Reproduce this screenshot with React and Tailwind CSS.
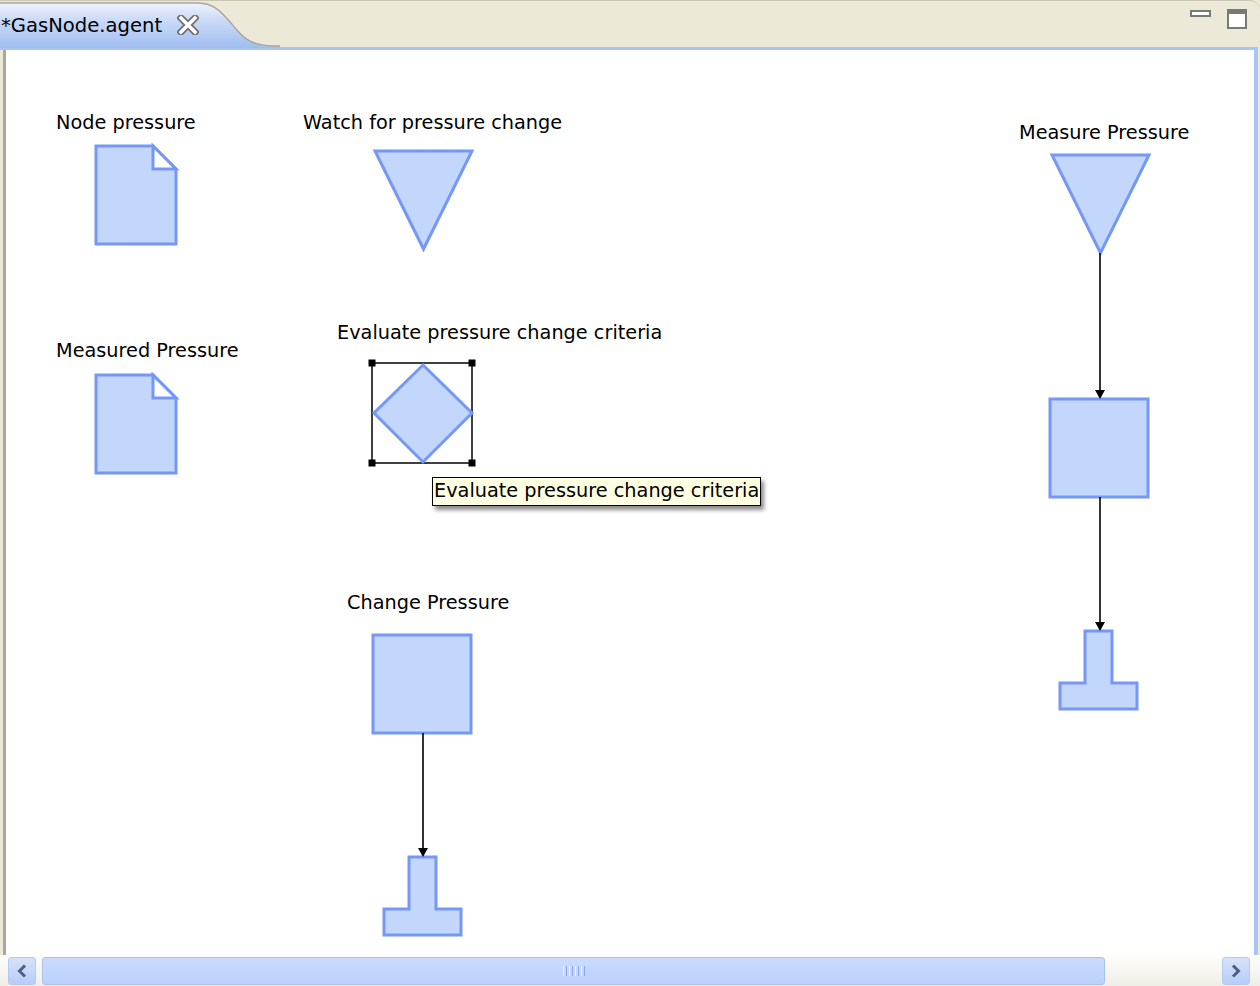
import React from 'react';

const FILL = '#c3d6fc';
const STROKE = '#7598f8';
const FONT = { fontFamily: '"DejaVu Sans", Verdana, sans-serif', fontSize: 19.3 };

const labels = [
  { text: 'Node pressure', x: 56, y: 129 },
  { text: 'Watch for pressure change', x: 303, y: 129 },
  { text: 'Measure Pressure', x: 1019, y: 139 },
  { text: 'Measured Pressure', x: 56, y: 357 },
  { text: 'Evaluate pressure change criteria', x: 337, y: 339 },
  { text: 'Change Pressure', x: 347, y: 609 },
];

const Doc = ({ x, y }) => (
  <g>
    <path
      d={`M${x} ${y} L${x + 57} ${y} L${x + 80} ${y + 23} L${x + 80} ${y + 98} L${x} ${y + 98} Z`}
      fill={FILL}
      stroke={STROKE}
      strokeWidth="3"
    />
    <path
      d={`M${x + 57} ${y} L${x + 57} ${y + 23} L${x + 80} ${y + 23} Z`}
      fill="#ffffff"
      stroke={STROKE}
      strokeWidth="3"
    />
  </g>
);

const Tri = ({ x, y }) => (
  <path
    d={`M${x} ${y} L${x + 97} ${y} L${x + 48.5} ${y + 98} Z`}
    fill={FILL}
    stroke={STROKE}
    strokeWidth="3"
  />
);

const Box = ({ x, y }) => (
  <rect x={x} y={y} width="98" height="98" fill={FILL} stroke={STROKE} strokeWidth="3" />
);

const Tee = ({ x, y }) => (
  <path
    d={`M${x + 25} ${y} L${x + 52} ${y} L${x + 52} ${y + 52} L${x + 77} ${y + 52} L${x + 77} ${y + 78} L${x} ${y + 78} L${x} ${y + 52} L${x + 25} ${y + 52} Z`}
    fill={FILL}
    stroke={STROKE}
    strokeWidth="3"
  />
);

const Arrow = ({ x, y1, y2 }) => (
  <g>
    <line x1={x} y1={y1} x2={x} y2={y2 - 6} stroke="#000" strokeWidth="1.6" />
    <path d={`M${x - 5} ${y2 - 9} L${x + 5} ${y2 - 9} L${x} ${y2} Z`} fill="#000" />
  </g>
);

const Handle = ({ x, y }) => <rect x={x - 3.5} y={y - 3.5} width="7" height="7" fill="#000" />;

const Diagram = () => (
  <svg className="absolute inset-0" width="1248" height="905" viewBox="6 50 1248 905">
    <Doc x={96} y={146} />
    <Doc x={96} y={375} />
    <Tri x={375} y={151} />
    <Tri x={1052} y={155} />

    <rect x="372" y="363" width="100" height="100" fill="none" stroke="#000" strokeWidth="1.5" />
    <path d="M423 365 L472 413 L423 462 L374 413 Z" fill={FILL} stroke={STROKE} strokeWidth="3" />
    <Handle x={372} y={363} />
    <Handle x={472} y={363} />
    <Handle x={372} y={463} />
    <Handle x={472} y={463} />

    <Box x={1050} y={399} />
    <Tee x={1060} y={631} />
    <Box x={373} y={635} />
    <Tee x={384} y={857} />

    <Arrow x={1100} y1={253} y2={399} />
    <Arrow x={1100} y1={497} y2={631} />
    <Arrow x={423} y1={733} y2={857} />

    {labels.map((l) => (
      <text key={l.text} x={l.x} y={l.y} fill="#000" style={FONT}>
        {l.text}
      </text>
    ))}
  </svg>
);

const App = () => {
  return (
    <div className="w-[1260px] h-[986px] flex flex-col bg-[#ece9d8] overflow-hidden">
      {/* Tab strip */}
      <div className="relative h-[47px] flex items-start border-t border-[#c9c6b6] rounded-tr-[10px]">
        <svg className="absolute left-0 top-0" width="280" height="47" viewBox="0 0 280 47">
          <defs>
            <linearGradient id="tabg" x1="0" y1="0" x2="0" y2="1">
              <stop offset="0" stopColor="#eef3fd" />
              <stop offset="0.35" stopColor="#cddcf8" />
              <stop offset="1" stopColor="#9fbdf0" />
            </linearGradient>
          </defs>
          <path d="M0 47 L0 2 L198 2 C216 2 224 14 236 28 C246 40 254 44 274 45 L280 45 L280 47 Z" fill="url(#tabg)" />
          <path d="M0 2 L198 2 C216 2 224 14 236 28 C246 40 254 44 274 45 L280 45" fill="none" stroke="#aca899" strokeWidth="1.5" />
        </svg>
        <div className="relative flex items-center h-[44px] pt-[6px] pl-[1px] gap-[15px]">
          <span className="text-black" style={{ ...FONT, fontSize: 19.6 }}>*GasNode.agent</span>
          <svg width="22" height="20" viewBox="0 0 22 20" className="mb-[2px]">
            <path d="M4 3 L18 17 M18 3 L4 17" stroke="#707070" strokeWidth="7" strokeLinecap="square" />
            <path d="M4 3 L18 17 M18 3 L4 17" stroke="#ffffff" strokeWidth="3.5" strokeLinecap="square" />
          </svg>
        </div>
        <div className="ml-auto flex items-start gap-[16px] pt-[8px] pr-[13px]">
          <div className="w-[21px] h-[7px] border-2 border-[#7a7a72] bg-white mt-[1px]" />
          <div className="w-[20px] h-[20px] border-2 border-[#7a7a72] bg-white flex flex-col">
            <div className="h-[3px] bg-[#7a7a72]" />
          </div>
        </div>
      </div>

      {/* Blue band under tabs */}
      <div className="h-[3px] bg-[#a9c4f1] mr-[2px]" />

      {/* Canvas */}
      <div className="flex-1 flex pl-[3px] pr-[2px]">
        <div className="w-[3px] bg-[#aca899]" />
        <div className="relative flex-1 bg-white">
          <Diagram />
          {/* Tooltip */}
          <div
            className="absolute left-[426px] top-[427px] h-[29px] px-[1px] flex items-center bg-[#ffffe1] border border-black shadow-[3px_4px_4px_rgba(0,0,0,0.45)] text-black whitespace-nowrap"
            style={FONT}
          >
            Evaluate pressure change criteria
          </div>
        </div>
        <div className="w-[4px] bg-[#a9c4f1]" />
      </div>

      {/* Horizontal scrollbar */}
      <div className="h-[31px] flex items-center gap-[6px] pl-[8px] pr-[10px] bg-gradient-to-b from-[#fdfdfa] to-[#efeee7]">
        <div className="w-[28px] h-[28px] rounded-[3px] bg-gradient-to-b from-[#d6e2fb] to-[#b8cdf8] border border-[#b6c9f1] flex items-center justify-center">
          <svg width="12" height="14" viewBox="0 0 12 14">
            <path d="M9 1.5 L3.5 7 L9 12.5" fill="none" stroke="#4d5f84" strokeWidth="3" />
          </svg>
        </div>
        <div className="w-[1063px] h-[28px] rounded-[3px] bg-gradient-to-b from-[#cbdbfd] to-[#bcd0fa] border border-[#a9c1f2] flex items-center justify-center gap-[2px]">
          <div className="w-[1px] h-[10px] bg-[#eef3ff]" />
          <div className="w-[1px] h-[10px] bg-[#8ea9e4]" />
          <div className="w-[1px] h-[10px] bg-[#eef3ff]" />
          <div className="w-[1px] h-[10px] bg-[#8ea9e4]" />
          <div className="w-[1px] h-[10px] bg-[#eef3ff]" />
          <div className="w-[1px] h-[10px] bg-[#8ea9e4]" />
          <div className="w-[1px] h-[10px] bg-[#eef3ff]" />
          <div className="w-[1px] h-[10px] bg-[#8ea9e4]" />
        </div>
        <div className="flex-1" />
        <div className="w-[28px] h-[28px] rounded-[3px] bg-gradient-to-b from-[#d6e2fb] to-[#b8cdf8] border border-[#b6c9f1] flex items-center justify-center">
          <svg width="12" height="14" viewBox="0 0 12 14">
            <path d="M3 1.5 L8.5 7 L3 12.5" fill="none" stroke="#4d5f84" strokeWidth="3" />
          </svg>
        </div>
      </div>
    </div>
  );
};

export default App;
